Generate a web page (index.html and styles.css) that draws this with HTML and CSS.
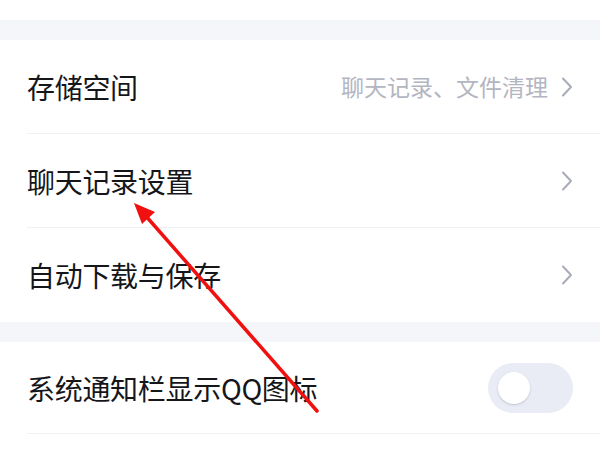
FILE: index.html
```html
<!DOCTYPE html>
<html lang="zh-CN">
<head>
<meta charset="utf-8">
<link rel="stylesheet" href="styles.css">
</head>
<body>
<div class="page">
  <div class="top"></div>
  <div class="band"></div>
  <div class="group">
    <div class="row">
      <span class="label">存储空间</span>
      <span class="right"><span class="hint">聊天记录、文件清理</span>
        <svg class="chev" width="10" height="20" viewBox="0 0 10 20"><polyline points="1,1.5 9,10 1,18.5" fill="none" stroke="#a9acb9" stroke-width="2" stroke-linecap="round" stroke-linejoin="round"/></svg>
      </span>
    </div>
    <div class="row">
      <span class="label">聊天记录设置</span>
      <span class="right">
        <svg class="chev" width="10" height="20" viewBox="0 0 10 20"><polyline points="1,1.5 9,10 1,18.5" fill="none" stroke="#a9acb9" stroke-width="2" stroke-linecap="round" stroke-linejoin="round"/></svg>
      </span>
    </div>
    <div class="row last">
      <span class="label">自动下载与保存</span>
      <span class="right">
        <svg class="chev" width="10" height="20" viewBox="0 0 10 20"><polyline points="1,1.5 9,10 1,18.5" fill="none" stroke="#a9acb9" stroke-width="2" stroke-linecap="round" stroke-linejoin="round"/></svg>
      </span>
    </div>
  </div>
  <div class="band"></div>
  <div class="group">
    <div class="row toggle-row">
      <span class="label">系统通知栏显示QQ图标</span>
      <span class="switch"><span class="knob"></span></span>
    </div>
  </div>
  <svg class="arrow" width="600" height="450" viewBox="0 0 600 450">
    <line x1="317" y1="411" x2="145" y2="215" stroke="#f01010" stroke-width="3.5" stroke-linecap="round"/>
    <polygon points="134,203 155,212 142,224" fill="#f01010"/>
  </svg>
</div>
</body>
</html>
```

FILE: styles.css
```css
html, body {
  margin: 0;
  padding: 0;
  background: #ffffff;
}
.page {
  position: relative;
  width: 600px;
  height: 450px;
  overflow: hidden;
  font-family: "Noto Sans CJK SC", "Noto Sans", sans-serif;
}
.top {
  height: 20px;
  background: #ffffff;
}
.band {
  height: 20px;
  background: #f5f6fa;
}
.group {
  background: #ffffff;
}
.row {
  height: 93px;
  margin-left: 27px;
  padding-right: 28px;
  border-bottom: 1px solid #f0f1f4;
  display: flex;
  align-items: center;
  justify-content: space-between;
}
.row.last {
  height: 94px;
  border-bottom: none;
}
.toggle-row {
  height: 91px;
  padding-right: 27px;
}
.label {
  font-size: 28px;
  color: #15161a;
  line-height: 1;
  letter-spacing: -0.3px;
}
.right {
  display: flex;
  align-items: center;
  gap: 14px;
}
.hint {
  font-size: 23px;
  color: #b3b5c1;
  line-height: 1;
}
.chev {
  display: block;
}
.switch {
  width: 85px;
  height: 50px;
  border-radius: 25px;
  background: #e9ebf5;
  display: flex;
  align-items: center;
  padding-left: 10px;
  box-sizing: border-box;
}
.knob {
  width: 32px;
  height: 32px;
  border-radius: 50%;
  background: #ffffff;
  box-shadow: 0 1px 2px rgba(120, 125, 150, 0.35);
}
.arrow {
  position: absolute;
  left: 0;
  top: 0;
  pointer-events: none;
}
```
